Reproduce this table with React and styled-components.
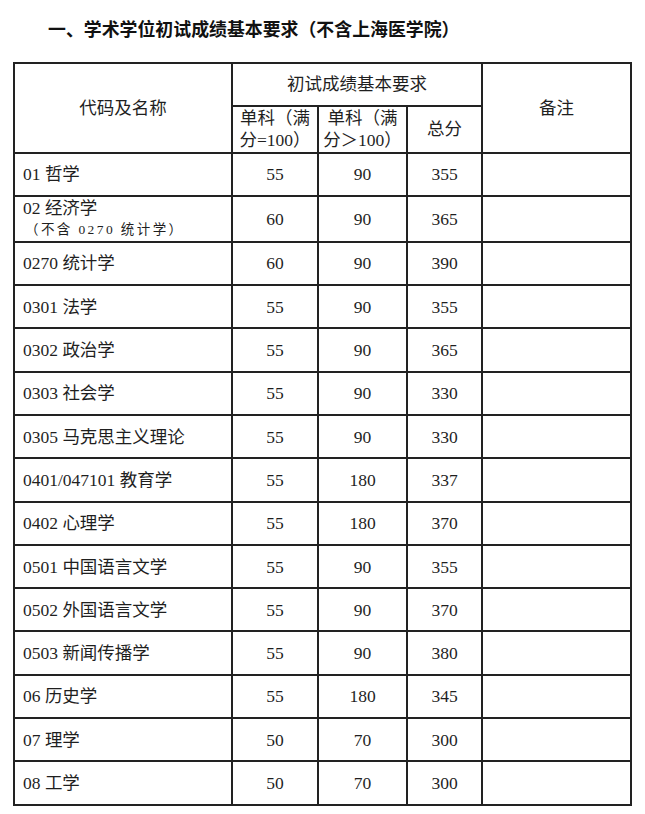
import styled, { createGlobalStyle } from 'styled-components';

const GlobalStyle = createGlobalStyle`
  html, body {
    margin: 0;
    padding: 0;
    background: #fff;
  }
`;

const Page = styled.div`
  width: 645px;
  min-height: 814px;
  background: #fff;
  color: #1f1f1f;
`;

const Title = styled.h1`
  margin: 0;
  padding: 16px 0 22px 48px;
  font-family: "Noto Sans CJK SC", "Noto Sans", sans-serif;
  font-size: 17.9px;
  line-height: 24px;
  font-weight: 700;
  color: #111;
  white-space: nowrap;
`;

const Table = styled.table`
  margin-left: 13px;
  width: 619px;
  border-collapse: collapse;
  table-layout: fixed;
  font-family: "Liberation Serif", "Noto Sans CJK SC", serif;
  font-size: 17.5px;
  color: #1f1f1f;
`;

const Row = styled.tr`
  height: ${({ $h }) => $h}px;
`;

const Cell = styled.td`
  border: 2px solid #222;
  padding: ${({ $left }) => ($left ? '0 0 0 8px' : '0 4px')};
  text-align: ${({ $left }) => ($left ? 'left' : 'center')};
  vertical-align: middle;
  line-height: 22px;
  white-space: nowrap;
  font-family: inherit;
`;

const HeadCell = styled(Cell).attrs({ as: 'th' })`
  font-weight: 400;
`;

const Note = styled.span`
  display: block;
  font-size: 13.5px;
  letter-spacing: 2.4px;
  padding-left: 2px;
`;

const rows = [
  { name: '01 哲学', a: 55, b: 90, c: 355 },
  { name: '02 经济学', note: '（不含 0270 统计学）', a: 60, b: 90, c: 365, h: 44.5 },
  { name: '0270 统计学', a: 60, b: 90, c: 390 },
  { name: '0301 法学', a: 55, b: 90, c: 355 },
  { name: '0302 政治学', a: 55, b: 90, c: 365 },
  { name: '0303 社会学', a: 55, b: 90, c: 330 },
  { name: '0305 马克思主义理论', a: 55, b: 90, c: 330 },
  { name: '0401/047101 教育学', a: 55, b: 180, c: 337 },
  { name: '0402 心理学', a: 55, b: 180, c: 370 },
  { name: '0501 中国语言文学', a: 55, b: 90, c: 355 },
  { name: '0502 外国语言文学', a: 55, b: 90, c: 370 },
  { name: '0503 新闻传播学', a: 55, b: 90, c: 380 },
  { name: '06 历史学', a: 55, b: 180, c: 345 },
  { name: '07 理学', a: 50, b: 70, c: 300 },
  { name: '08 工学', a: 50, b: 70, c: 300 },
];

export default function App() {
  return (
    <Page>
      <GlobalStyle />
      <Title>一、学术学位初试成绩基本要求（不含上海医学院）</Title>
      <Table>
        <colgroup>
          <col style={{ width: 218 }} />
          <col style={{ width: 86 }} />
          <col style={{ width: 89 }} />
          <col style={{ width: 75 }} />
          <col style={{ width: 149 }} />
        </colgroup>
        <thead>
          <Row $h={42.5}>
            <HeadCell rowSpan={2}>代码及名称</HeadCell>
            <HeadCell colSpan={3}>初试成绩基本要求</HeadCell>
            <HeadCell rowSpan={2}>备注</HeadCell>
          </Row>
          <Row $h={47}>
            <HeadCell>单科（满<br />分=100）</HeadCell>
            <HeadCell>单科（满<br />分＞100）</HeadCell>
            <HeadCell>总分</HeadCell>
          </Row>
        </thead>
        <tbody>
          {rows.map((r) => (
            <Row key={r.name} $h={r.h || 43.3}>
              <Cell $left>
                {r.name}
                {r.note && <Note>{r.note}</Note>}
              </Cell>
              <Cell>{r.a}</Cell>
              <Cell>{r.b}</Cell>
              <Cell>{r.c}</Cell>
              <Cell />
            </Row>
          ))}
        </tbody>
      </Table>
    </Page>
  );
}
